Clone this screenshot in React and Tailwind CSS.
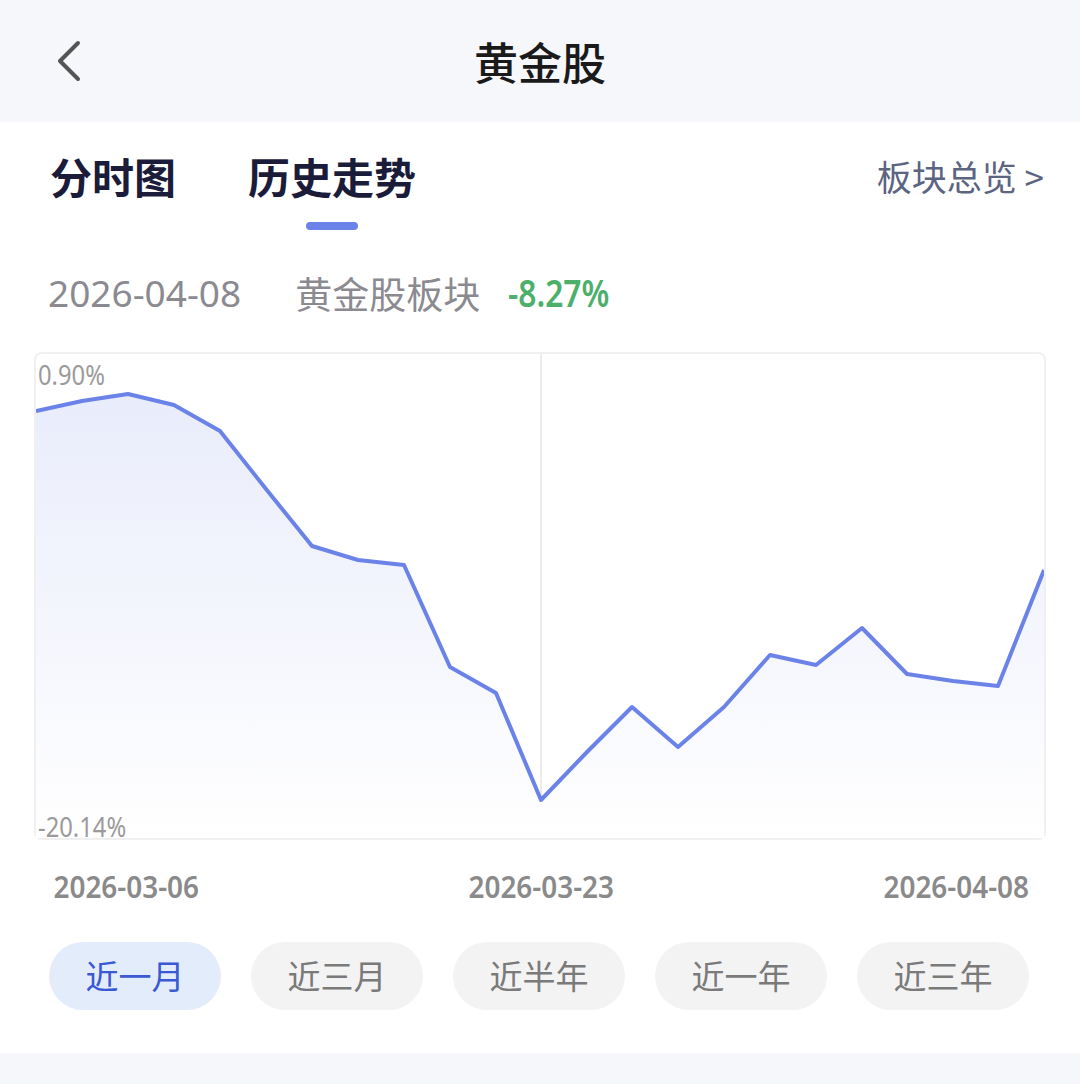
import React from "react";

const points = [
  [0, 57], [46, 47], [92, 40], [138, 51], [184, 77], [230, 135], [276, 192],
  [322, 206], [368, 211], [414, 313], [460, 339], [505, 446], [551, 398],
  [596, 353], [642, 393], [688, 353], [734, 301], [780, 311], [826, 274],
  [871, 320], [917, 327], [962, 332], [1008, 216],
];

const ranges = ["近一月", "近三月", "近半年", "近一年", "近三年"];

const cjk = { fontFamily: '"Noto Sans CJK SC", "Noto Sans", sans-serif' };
const num = { fontFamily: '"Noto Sans", "Noto Sans CJK SC", sans-serif' };

const Chart = () => {
  const line = points.map((p) => p.join(",")).join(" ");
  const area = `0,484 ${line} 1008,484`;
  return (
    <div className="relative mx-[36px] h-[484px] rounded-md bg-white ring-2 ring-[#f0f0f0]">
      <svg className="absolute inset-0" width="1008" height="484" viewBox="0 0 1008 484">
        <defs>
          <linearGradient id="fill" x1="0" y1="0" x2="0" y2="1">
            <stop offset="0%" stopColor="#e9ecfb" />
            <stop offset="100%" stopColor="#ffffff" />
          </linearGradient>
        </defs>
        <line x1="505" y1="0" x2="505" y2="484" stroke="#ececec" strokeWidth="2" />
        <polygon points={area} fill="url(#fill)" />
        <polyline points={line} fill="none" stroke="#6b83e8" strokeWidth="4" strokeLinejoin="round" />
      </svg>
      <span className="absolute left-[2px] top-[6px] origin-left scale-x-[0.88] text-[27px] leading-[30px] text-[#9a9a9a]" style={num}>
        0.90%
      </span>
      <span className="absolute left-[2px] bottom-[-4px] origin-left scale-x-[0.88] text-[27px] leading-[30px] text-[#9a9a9a]" style={num}>
        -20.14%
      </span>
    </div>
  );
};

const AxisLabel = ({ children }) => (
  <div className="flex w-[144px] justify-center">
    <span className="whitespace-nowrap scale-x-[0.93] text-[30px] leading-[36px] font-semibold text-[#8a8a8a]" style={num}>
      {children}
    </span>
  </div>
);

export default function App() {
  return (
    <div className="w-[1080px] h-[1084px] bg-white overflow-hidden" style={cjk}>
      {/* Header */}
      <div className="relative flex h-[122px] items-center justify-center bg-[#f6f7fa]">
        <svg className="absolute left-[52px] top-[40px]" width="34" height="42" viewBox="0 0 34 42">
          <path d="M26 3 L8 21 L26 39" fill="none" stroke="#555" strokeWidth="4" strokeLinecap="round" strokeLinejoin="round" />
        </svg>
        <span className="text-[44px] font-medium text-[#1a1a1a]">黄金股</span>
      </div>

      {/* Tabs */}
      <div className="flex items-start justify-between pl-[50px] pr-[36px] pt-[28px]">
        <div className="flex gap-[72px]">
          <div className="flex flex-col items-center">
            <span className="text-[42px] leading-[52px] font-bold text-[#1b1c3a]">分时图</span>
          </div>
          <div className="flex flex-col items-center">
            <span className="text-[42px] leading-[52px] font-bold text-[#1b1c3a]">历史走势</span>
            <div className="mt-[20px] h-[8px] w-[52px] rounded-full bg-[#6b83e8]" />
          </div>
        </div>
        <span className="text-[35px] leading-[52px] text-[#5b6480]">板块总览 &gt;</span>
      </div>

      {/* Info row */}
      <div className="mt-[39px] flex items-center pl-[48px] text-[37px] leading-[48px]">
        <span className="text-[#8a8a90]" style={num}>2026-04-08</span>
        <span className="ml-[54px] text-[#8a8a90]">黄金股板块</span>
        <span className="ml-[28px] inline-block origin-left scale-x-[0.86] font-semibold text-[#4caf6b]" style={num}>-8.27%</span>
      </div>

      {/* Chart */}
      <div className="mt-[37px]">
        <Chart />
      </div>

      {/* X axis */}
      <div className="mt-[31px] flex justify-between pl-[54px] pr-[52px]">
        <AxisLabel>2026-03-06</AxisLabel>
        <AxisLabel>2026-03-23</AxisLabel>
        <AxisLabel>2026-04-08</AxisLabel>
      </div>

      {/* Range buttons */}
      <div className="mt-[37px] flex gap-[30px] pl-[49px]">
        {ranges.map((r, i) => (
          <div
            key={r}
            className={
              i === 0
                ? "flex h-[68px] w-[172px] items-center justify-center rounded-full bg-[#e3ecfa] text-[33px] text-[#3a59d3]"
                : "flex h-[68px] w-[172px] items-center justify-center rounded-full bg-[#f3f3f3] text-[33px] text-[#7a7a7a]"
            }
          >
            {r}
          </div>
        ))}
      </div>

      <div className="mt-[43px] h-[31px] bg-[#f6f7fa]" />
    </div>
  );
}
